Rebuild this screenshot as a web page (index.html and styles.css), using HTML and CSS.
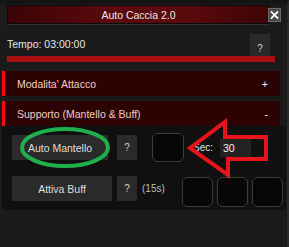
FILE: index.html
```html
<!DOCTYPE html>
<html>
<head>
<meta charset="utf-8">
<link rel="stylesheet" href="styles.css">
</head>
<body>
<div class="window">
  <div class="titlerow">
    <div class="title">Auto Caccia 2.0</div>
    <div class="close">
      <svg width="13" height="14" viewBox="0 0 13 14"><path d="M3 3.5 L10 10.5 M10 3.5 L3 10.5" stroke="#fff" stroke-width="2" stroke-linecap="square"/></svg>
    </div>
  </div>
  <div class="tempo-row">
    <span class="tempo">Tempo: 03:00:00</span>
    <div class="help help-tall">?</div>
  </div>
  <div class="progress"></div>
  <div class="section">
    <span>Modalita' Attacco</span><span class="sign">+</span>
  </div>
  <div class="section section-2">
    <span>Supporto (Mantello &amp; Buff)</span><span class="sign">-</span>
  </div>
  <div class="content">
    <div class="row row-1">
      <div class="btn btn-mantello">Auto Mantello</div>
      <div class="help help-a">?</div>
      <div class="slot slot-big"></div>
      <span class="sec-label">Sec:</span>
      <div class="input">30</div>
    </div>
    <div class="row row-2">
      <div class="btn btn-buff">Attiva Buff</div>
      <div class="help help-b">?</div>
      <span class="cooldown">(15s)</span>
      <div class="slots">
        <div class="slot"></div>
        <div class="slot"></div>
        <div class="slot"></div>
      </div>
    </div>
  </div>
  <svg class="annot" width="289" height="247" viewBox="0 0 289 247">
    <ellipse cx="65" cy="147.5" rx="43" ry="18.5" fill="none" stroke="#1faf4b" stroke-width="4"/>
    <polygon points="190,148 225,122 225,137 266,137 266,159 228,159 228,175" fill="none" stroke="#e8141c" stroke-width="4" stroke-linejoin="miter"/>
  </svg>
</div>
</body>
</html>
```

FILE: styles.css
```css
* { box-sizing: border-box; }
html, body { margin: 0; padding: 0; }
body {
  width: 289px;
  height: 247px;
  background: #1b1b1b;
  font-family: "Liberation Sans", Arial, sans-serif;
  font-size: 10px;
  color: #dcdcdc;
  overflow: hidden;
}
.window {
  position: relative;
  width: 289px;
  height: 247px;
  background: #1b1b1b;
  border-top: 4px solid #141414;
  border-right: 2px solid #2a2a2a;
}
.titlerow {
  display: flex;
  align-items: center;
  padding-top: 1px;
  padding-left: 7px;
}
.title {
  width: 263px;
  height: 19px;
  background: linear-gradient(90deg, #3a0406 0%, #5c0a0d 40%, #5a090c 70%, #3c0506 100%);
  border: 1px solid #0b0b0b;
  box-shadow: 0 1px 0 #333;
  color: #e8e8e8;
  font-size: 10.5px;
  display: flex;
  align-items: center;
  justify-content: center;
}
.close {
  width: 13px;
  height: 14px;
  margin-left: -2px;
  background: #4a4a4a;
  border: 1px solid #6a6a6a;
  display: flex;
  align-items: center;
  justify-content: center;
}
.close svg { display: block; }
.tempo-row {
  margin-top: 10px;
  height: 22px;
  padding: 0 17px 0 7px;
  display: flex;
  justify-content: space-between;
  align-items: flex-start;
}
.tempo {
  margin-top: 4px;
  color: #e6e6e6;
  font-size: 10.5px;
}
.help {
  width: 20px;
  height: 25px;
  background: #2a2a2a;
  color: #cfcfcf;
  display: flex;
  align-items: center;
  justify-content: center;
}
.help-tall {
  height: 22px;
  padding-top: 6px;
}
.progress {
  margin: 0 12px 0 7px;
  height: 6px;
  background: #a90e0e;
}
.section {
  margin: 9px 7px 0 2px;
  height: 25px;
  background: #2c0203;
  border-left: 3px solid #ff0a0a;
  padding: 0 12px 0 12px;
  display: flex;
  justify-content: space-between;
  align-items: center;
  color: #f3cdc4;
  font-size: 10.5px;
}
.section-2 { margin-top: 5px; }
.sign { color: #f5f5f5; }
.content {
  margin: 0 1px 0 2px;
  height: 84px;
  background: #101010;
  padding: 7px 3px 0 10px;
}
.row {
  display: flex;
  align-items: center;
}
.row-1 { height: 29px; }
.row-2 {
  margin-top: 14px;
  align-items: flex-start;
}
.btn {
  height: 25px;
  background: #2b2b2b;
  color: #dedede;
  display: flex;
  align-items: center;
  justify-content: center;
  font-size: 10.5px;
}
.btn-mantello { width: 96px; }
.btn-buff { width: 100px; }
.help-a { margin-left: 9px; }
.help-b { margin-left: 5px; }
.slot {
  position: relative;
  width: 31px;
  height: 30px;
  background: #3a3a3a;
  clip-path: polygon(4px 0, calc(100% - 4px) 0, 100% 4px, 100% calc(100% - 4px), calc(100% - 4px) 100%, 4px 100%, 0 calc(100% - 4px), 0 4px);
}
.slot::before {
  content: "";
  position: absolute;
  inset: 1px;
  background: #070707;
  clip-path: polygon(3px 0, calc(100% - 3px) 0, 100% 3px, 100% calc(100% - 3px), calc(100% - 3px) 100%, 3px 100%, 0 calc(100% - 3px), 0 3px);
}
.slot-big {
  margin-left: 15px;
  width: 32px;
  height: 29px;
}
.sec-label {
  margin-left: 9px;
  color: #e0e0e0;
}
.input {
  margin-left: 7px;
  width: 31px;
  height: 18px;
  background: #232323;
  color: #f2f2f2;
  padding-left: 3px;
  display: flex;
  align-items: center;
  font-size: 10.5px;
}
.cooldown {
  margin-left: 5px;
  margin-top: 7px;
  color: #bcbcbc;
}
.slots {
  margin-left: auto;
  margin-top: 1px;
  display: flex;
  gap: 4px;
}
.annot {
  position: absolute;
  left: 0;
  top: -4px;
  pointer-events: none;
}
```
